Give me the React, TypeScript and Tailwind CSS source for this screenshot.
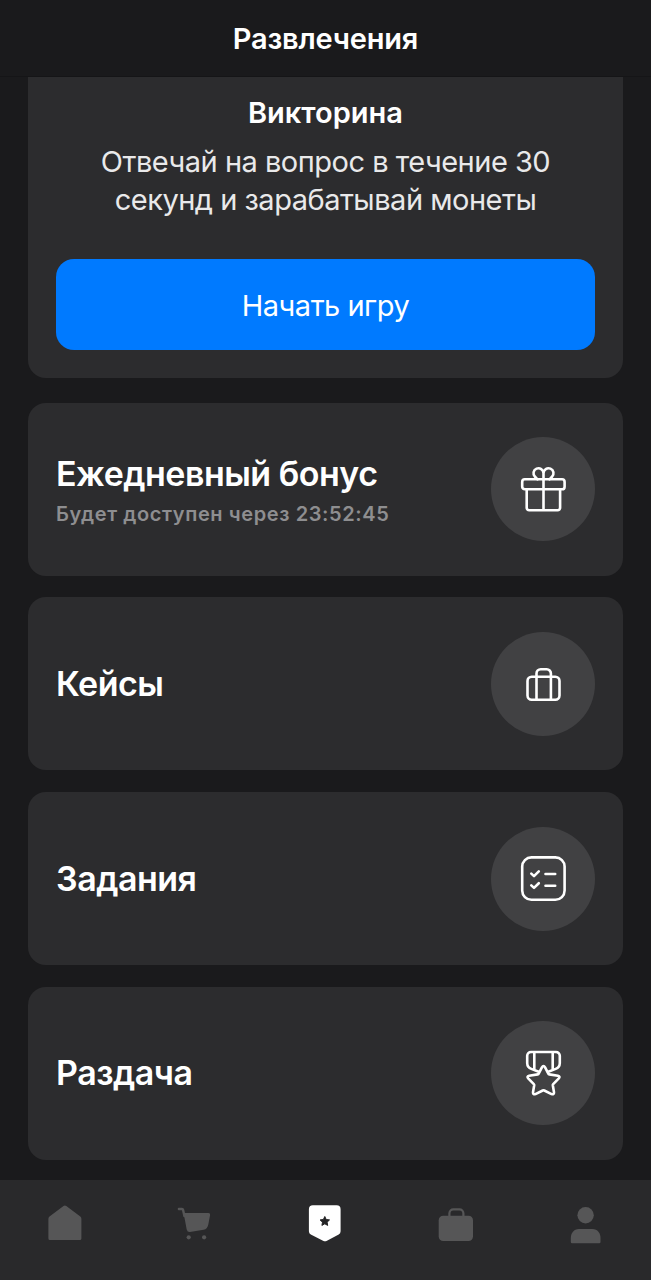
import { useState } from 'react';
import type { ReactNode } from 'react';

type Item = {
  title: string;
  note?: string;
  icon: ReactNode;
};

const items: Item[] = [
  { title: 'Ежедневный бонус', note: 'Будет доступен через 23:52:45', icon: <GiftIcon /> },
  { title: 'Кейсы', icon: <SuitcaseIcon /> },
  { title: 'Задания', icon: <TasksIcon /> },
  { title: 'Раздача', icon: <MedalIcon /> },
];

const tabs = [
  { label: 'Главная', icon: <HomeIcon /> },
  { label: 'Магазин', icon: <CartIcon /> },
  { label: 'Развлечения', icon: <BadgeIcon /> },
  { label: 'Инвентарь', icon: <BagIcon /> },
  { label: 'Профиль', icon: <PersonIcon /> },
];

export default function App() {
  return (
    <div className="flex h-[1280px] w-full flex-col overflow-hidden bg-[#1a1a1c] font-[Inter,sans-serif] text-white">
      <header className="flex h-[77px] shrink-0 items-center justify-center border-b border-[#151517] pt-0.5">
        <h1 className="text-[29px] font-semibold leading-9 tracking-[-0.2px]">Развлечения</h1>
      </header>

      <main className="flex min-h-0 flex-1 flex-col px-7">
        <QuizCard />
        <div className="mt-[25px] flex flex-col gap-[21.4px]">
          {items.map((item) => (
            <ItemCard key={item.title} item={item} />
          ))}
        </div>
      </main>

      <TabBar />
    </div>
  );
}

function QuizCard() {
  return (
    <section className="flex h-[300.5px] shrink-0 flex-col rounded-b-[18px] bg-[#2c2c2e] px-7 pt-[18px] text-center">
      <h2 className="text-[29px] font-semibold leading-9">Викторина</h2>
      <p className="mt-3 text-[29px] leading-[38px] tracking-[-0.5px] text-[#e9e9ea]">
        Отвечай на вопрос в течение 30
        <br />
        секунд и зарабатывай монеты
      </p>
      <button className="mt-10 h-[91px] rounded-[18px] bg-[#007aff] pt-0.5 text-[29px] tracking-[-0.5px]">
        Начать игру
      </button>
    </section>
  );
}

function ItemCard({ item }: { item: Item }) {
  return (
    <section className="flex h-[173.3px] shrink-0 items-center justify-between rounded-[18px] bg-[#2c2c2e] px-7">
      <div>
        <h2 className="text-[34px] font-semibold leading-10 tracking-[-0.5px]">{item.title}</h2>
        {item.note && (
          <p className="mt-1 -mb-1.5 text-[20px] font-semibold leading-8 tracking-[0.6px] text-[#8e8e90]">
            {item.note}
          </p>
        )}
      </div>
      <div className="flex size-[104px] items-center justify-center rounded-full bg-[#414143]">
        {item.icon}
      </div>
    </section>
  );
}

function TabBar() {
  const [active, setActive] = useState(2);

  return (
    <nav className="grid h-[100px] shrink-0 grid-cols-5 bg-[#29292b] pt-5">
      {tabs.map((tab, i) => (
        <button
          key={tab.label}
          aria-label={tab.label}
          onClick={() => setActive(i)}
          className={
            i === active
              ? 'flex items-start justify-center text-white'
              : 'flex items-start justify-center text-[#565657]'
          }
        >
          {tab.icon}
        </button>
      ))}
    </nav>
  );
}

function LineIcon({ children }: { children: ReactNode }) {
  return (
    <svg
      viewBox="-0.5 0 48 48"
      className="size-12"
      fill="none"
      stroke="currentColor"
      strokeWidth="2.6"
      strokeLinecap="round"
      strokeLinejoin="round"
    >
      {children}
    </svg>
  );
}

function GiftIcon() {
  return (
    <LineIcon>
      <rect x="2.7" y="14.3" width="42.4" height="10" rx="2.6" />
      <path d="M7.2 24.5V42.8a2.5 2.5 0 0 0 2.5 2.5h28.4a2.5 2.5 0 0 0 2.5-2.5V24.5M24 14.3v31" />
      <path d="M24 14.3V8.2a5 5 0 1 0-8.5 3.6l2.5 2.5M24 14.3V8.2a5 5 0 1 1 8.5 3.6L30 14.3" />
    </LineIcon>
  );
}

function SuitcaseIcon() {
  return (
    <LineIcon>
      <rect x="8" y="16.7" width="32" height="23" rx="4.2" />
      <path d="M17 39.7V13.5a4.2 4.2 0 0 1 4.2-4.2h6a4.2 4.2 0 0 1 4.2 4.2v26.2" />
    </LineIcon>
  );
}

function TasksIcon() {
  return (
    <LineIcon>
      <rect x="2.7" y="2.4" width="42.4" height="42.4" rx="9.2" />
      <path d="M11.8 18.6l2.7 2.5 4.8-4.7M26 19h9.7M11.8 30.4l2.7 2.5 4.8-4.7M26 30.8h9.7" />
    </LineIcon>
  );
}

function MedalIcon() {
  return (
    <LineIcon>
      <path d="M19.2 22.8l-7.4-2.9A6.2 6.2 0 0 1 7.7 14.3V6.8A3.8 3.8 0 0 1 11.5 3h25a3.8 3.8 0 0 1 3.8 3.8v7.5a6.2 6.2 0 0 1-4.1 5.6l-7.4 2.9M14.8 3v17.7M33.2 3v17.7" />
      <path d="M22.4 18.4q1.6-2.8 3.2 0l3.2 6.3q.3.6 1 .7l8.6 1.3q2.6.6.9 2.7l-5.6 5.7q-.5.5-.4 1.2l1.2 6.9q.1 2.8-2.5 1.9l-7.2-3.6q-.8-.4-1.6 0L16 45.1q-2.6.9-2.5-1.9l1.2-6.9q.1-.7-.4-1.2l-5.6-5.7q-1.7-2.1.9-2.7l8.6-1.3q.7-.1 1-.7z" />
    </LineIcon>
  );
}

function FillIcon({ children }: { children: ReactNode }) {
  return (
    <svg viewBox="-0.4 0 48 48" className="size-12" fill="currentColor">
      {children}
    </svg>
  );
}

function HomeIcon() {
  return (
    <FillIcon>
      <path d="M22.1 6q1.4-1 2.8 0l14 10.6q1.1.8 1.1 2.2v19.7q0 1.5-1.5 1.5h-30Q7 40 7 38.5V18.8q0-1.4 1.1-2.2z" />
    </FillIcon>
  );
}

function CartIcon() {
  return (
    <FillIcon>
      <path
        d="M7.5 9h3q1 0 1.200 1l1.300 6"
        fill="none"
        stroke="currentColor"
        strokeWidth="2.4"
        strokeLinecap="round"
      />
      <path d="M12.2 13H37q2 0 1.700 2l-1.700 9q-.8 5.300-4.800 5.700L18.500 32q-2.500.2-3.200-2.500z" />
      <circle cx="17.3" cy="37.3" r="2.1" />
      <circle cx="32.7" cy="37.3" r="2.1" />
    </FillIcon>
  );
}

function BadgeIcon() {
  return (
    <FillIcon>
      <path d="M11.500 5.300h23.700a4 4 0 0 1 4 4v22q0 2.200-1.900 3.300l-12.200 6.400q-1.500.7-3 0L9.400 34.600Q7.500 33.500 7.500 31.300v-22a4 4 0 0 1 4-4z" />
      <path
        d="M23.400 16.500l1.400 3 3.300.4-2.400 2.300.6 3.200-2.900-1.600-2.900 1.600.6-3.200-2.400-2.300 3.300-.4z"
        fill="#232325"
        stroke="#232325"
        strokeWidth="1"
        strokeLinejoin="round"
      />
    </FillIcon>
  );
}

function BagIcon() {
  return (
    <FillIcon>
      <rect x="6.3" y="15.7" width="34.3" height="25.3" rx="4.5" />
      <path
        d="M17 17v-3.700a4 4 0 0 1 4-4h6a4 4 0 0 1 4 4V17"
        fill="none"
        stroke="currentColor"
        strokeWidth="2.2"
      />
    </FillIcon>
  );
}

function PersonIcon() {
  return (
    <FillIcon>
      <circle cx="23.2" cy="15.2" r="8.2" />
      <path d="M16.500 29h13.600c5 0 8 4 8 9v4q0 1.300-1.300 1.300H9.700q-1.300 0-1.300-1.300v-4c0-5 3.100-9 8.100-9z" />
    </FillIcon>
  );
}
